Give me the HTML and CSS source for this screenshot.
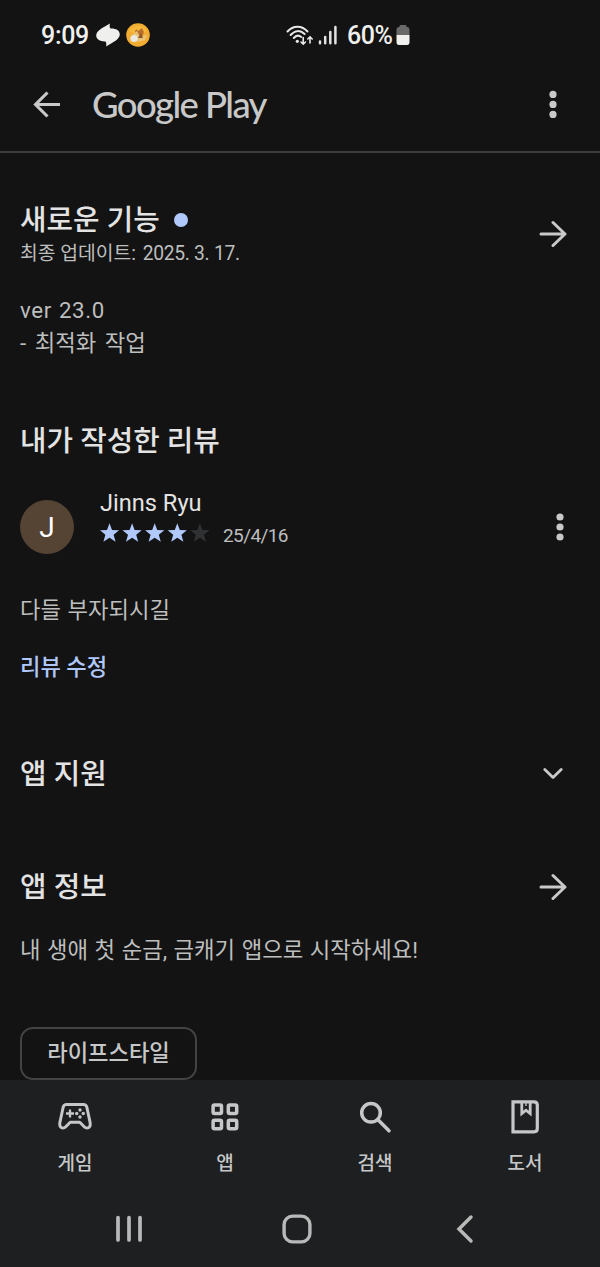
FILE: index.html
```html
<!DOCTYPE html>
<html lang="ko">
<head>
<meta charset="utf-8">
<title>Google Play</title>
<link rel="stylesheet" href="styles.css">
</head>
<body>
<div class="screen">
  <div class="status">
    <div class="status-left">
      <span class="clock">9:09</span>
      <svg class="swirl" width="24" height="24" viewBox="0 0 24 24"><path d="M14 .6C13.4 3 13.6 4.6 14.6 5.6C20 5.4 23.6 7.6 23.8 11.2C24 16 17 19.4 10 23.4C10.6 21 10.4 19.4 9.4 18.4C4 18.6 .4 16.4 .2 12.8C0 8 7 4.6 14 .6Z" fill="#efefed"/></svg>
      <svg class="coin" width="24" height="24" viewBox="0 0 24 24"><circle cx="12" cy="12" r="11.8" fill="#f2ac32"/><path d="M3 8C7 2 17 1 21 8L12 12Z" fill="#f8b83c"/><path d="M10 6L12 8L16 5L18 9L16 14L11 13L9 9Z" fill="#b9702c"/><path d="M6 12L11 8L13 12L16 13L21 12L19 17L12 19Z" fill="#e9c477"/><circle cx="8" cy="15.5" r="3.6" fill="#ece9e4"/><path d="M12 15L15 10L17 15Z" fill="#8d5526"/></svg>
    </div>
    <div class="status-center">
      <svg width="28" height="24" viewBox="0 0 28 24" fill="none" stroke="#e8e8e8" stroke-width="2" stroke-linecap="round"><path d="M1.5 8.5C7 2 16 2 21.5 8.5M4.6 12C9 7 14.5 7 18.6 11M7.8 15C10 12.4 13 12.2 15.3 14"/><circle cx="11.3" cy="18.3" r="1.6" fill="#e8e8e8" stroke="none"/><path d="M17.2 14.5V21M15 19L17.2 21.2L19.4 19M24 20V14M21.8 16L24 13.8L26.2 16" stroke-width="1.6"/></svg>
      <svg class="signal" width="20" height="24" viewBox="0 0 20 24" stroke="#e2e2e2" stroke-width="2.5" stroke-linecap="round"><path d="M2 18.5V20.3M7.2 14V20.3M12.3 9V20.3M17.4 4V20.3"/></svg>
      <span class="percent">60%</span>
      <svg class="battery" width="14" height="22" viewBox="0 0 14 22"><path d="M3.5 3V2Q3.5 1 5 1H9Q10.5 1 10.5 2V3H11Q13.5 3 13.5 6V11H.5V6Q.5 3 3 3Z" fill="#69696a"/><path d="M.5 11H13.5V18Q13.5 21 11 21H3Q.5 21 .5 18Z" fill="#f0f0ee"/></svg>
    </div>
  </div>

  <header class="appbar">
    <svg width="28" height="28" viewBox="0 0 28 28" fill="none" stroke="#c9c9c9" stroke-width="3.1"><path d="M27 14.5H3M14.5 2.5L2.5 14.5L14.5 26.5"/></svg>
    <span class="brand">Google Play</span>
    <svg class="more" width="8" height="28" viewBox="0 0 8 28" fill="#c9c9c9"><circle cx="4" cy="4.4" r="3.6"/><circle cx="4" cy="14.4" r="3.6"/><circle cx="4" cy="24.4" r="3.6"/></svg>
  </header>

  <main class="content">
    <section class="whats-new">
      <div class="row">
        <div>
          <div class="title-line"><h2>새로운 기능</h2><span class="dot"></span></div>
          <p class="updated">최종 업데이트: <span class="date">2025. 3. 17.</span></p>
        </div>
        <svg class="arrow" width="28" height="28" viewBox="0 0 28 28" fill="none" stroke="#c9c9c9" stroke-width="3" stroke-linecap="round" stroke-linejoin="round"><path d="M2 14H26M14 2.5L26 14L14 25.5"/></svg>
      </div>
      <p class="body notes"><span class="version">ver 23.0</span><br>- 최적화 작업</p>
    </section>

    <section class="review">
      <h2>내가 작성한 리뷰</h2>
      <div class="reviewer">
        <span class="avatar">J</span>
        <div class="meta">
          <div class="name">Jinns Ryu</div>
          <div class="rating">
            <svg width="110" height="20" viewBox="0 0 110 20" fill="#b1c8fb"><defs><path id="star" d="M9.5 .3L12 6.9L19.1 7.2L13.6 11.7L15.6 18.7L9.5 14.7L3.4 18.7L5.4 11.7L-.1 7.2L7 6.9Z"/></defs><use href="#star"/><use href="#star" x="22.6"/><use href="#star" x="45.2"/><use href="#star" x="67.8"/><use href="#star" x="90.4" fill="#303132"/></svg>
            <span class="review-date">25/4/16</span>
          </div>
        </div>
        <svg class="more" width="8" height="28" viewBox="0 0 8 28" fill="#c9c9c9"><circle cx="4" cy="4" r="3.6"/><circle cx="4" cy="14" r="3.6"/><circle cx="4" cy="24" r="3.6"/></svg>
      </div>
      <p class="body comment">다들 부자되시길</p>
      <a class="edit">리뷰 수정</a>
    </section>

    <section class="row support">
      <h2>앱 지원</h2>
      <svg class="chevron" width="20" height="14" viewBox="0 0 20 14" fill="none" stroke="#c9c9c9" stroke-width="2.8" stroke-linecap="round" stroke-linejoin="round"><path d="M1.8 2.5L10 10.5L18.2 2.5"/></svg>
    </section>

    <section class="about">
      <div class="row">
        <h2>앱 정보</h2>
        <svg width="28" height="28" viewBox="0 0 28 28" fill="none" stroke="#c9c9c9" stroke-width="3" stroke-linecap="round" stroke-linejoin="round"><path d="M2 14H26M14 2.5L26 14L14 25.5"/></svg>
      </div>
      <p class="body tagline">내 생애 첫 순금, 금캐기 앱으로 시작하세요!</p>
      <span class="chip">라이프스타일</span>
    </section>
  </main>

  <footer class="bottom">
    <nav class="tabs">
      <div class="tab"><svg width="36" height="36" viewBox="0 0 36 36" fill="none" stroke="#c6c7c8" stroke-width="3" stroke-linejoin="round"><path d="M9.5 5.5H26.5Q29 5.5 29.8 8L33.2 24Q33.6 29 30 29Q28.5 29 27.5 28L22.8 23.2H13.2L8.5 28Q7.5 29 6 29Q2.4 29 2.8 24L6.2 8Q7 5.5 9.5 5.5Z"/><path d="M13 10.5V18.5M9 14.5H17" stroke-width="2.3"/><g fill="#c6c7c8" stroke="none"><circle cx="23" cy="11" r="1.7"/><circle cx="19.7" cy="14.5" r="1.7"/><circle cx="26.3" cy="14.5" r="1.7"/><circle cx="23" cy="18" r="1.7"/></g></svg><span>게임</span></div>
      <div class="tab"><svg width="36" height="36" viewBox="0 0 36 36" fill="none" stroke="#c6c7c8" stroke-width="3.5"><rect x="6.1" y="6.1" width="8.4" height="8.4" rx="1.5"/><rect x="21.3" y="6.1" width="8.4" height="8.4" rx="1.5"/><rect x="6.1" y="21.3" width="8.4" height="8.4" rx="1.5"/><rect x="21.3" y="21.3" width="8.4" height="8.4" rx="1.5"/></svg><span>앱</span></div>
      <div class="tab"><svg width="36" height="36" viewBox="0 0 36 36" fill="none" stroke="#c6c7c8" stroke-width="3.5" stroke-linecap="round"><circle cx="14" cy="13.8" r="9.3"/><path d="M21 20.8L32 31.8"/></svg><span>검색</span></div>
      <div class="tab"><svg width="36" height="36" viewBox="0 0 36 36" fill="none" stroke="#c6c7c8" stroke-width="3.2"><path d="M6 2.8H27Q30.3 2.8 30.3 6.1V29.5Q30.3 32.8 27 32.8H6Z"/><path d="M14.8 3V14.6L19 11.2L23.2 14.6V3" stroke-width="2.8"/><path d="M19 3V7" stroke-width="1.4"/></svg><span>도서</span></div>
    </nav>
    <div class="system">
      <svg width="28" height="30" viewBox="0 0 28 30" stroke="#b9b9b9" stroke-width="3.7" stroke-linecap="round"><path d="M3 3.5V26M14 3.5V26M25 3.5V26"/></svg>
      <svg class="home" width="30" height="30" viewBox="0 0 30 30" fill="none" stroke="#b9b9b9" stroke-width="3.4"><rect x="2.1" y="2.1" width="25.8" height="25.8" rx="8.5"/></svg>
      <svg width="18" height="30" viewBox="0 0 18 30" fill="none" stroke="#b9b9b9" stroke-width="3.5" stroke-linecap="round"><path d="M15 3L3 15L15 27"/></svg>
    </div>
  </footer>
</div>
</body>
</html>
```
FILE: styles.css
```css
* { box-sizing: border-box; }
body { margin: 0; background: #131313; }
h2, p { margin: 0; }
svg { display: block; flex: none; }

.screen {
  width: 600px;
  height: 1267px;
  display: flex;
  flex-direction: column;
  overflow: hidden;
  background: #131313;
  color: #e3e3e3;
  font-family: Roboto, "Noto Sans CJK KR", sans-serif;
}

.status {
  display: flex;
  height: 70px;
  padding-left: 41px;
  color: #efefed;
  font-size: 25px;
  font-weight: 500;
  line-height: 71px;
}
.status-left { display: flex; align-items: center; width: 245px; }
.clock { width: 55px; letter-spacing: -0.3px; }
.coin { margin-left: 6px; }
.status-center { display: flex; align-items: center; }
.signal { margin-left: 4px; }
.percent { width: 49px; margin-left: 9px; letter-spacing: -0.5px; }

.appbar {
  display: flex;
  align-items: center;
  height: 83px;
  padding: 0 43px 13px 33px;
  border-bottom: 2px solid #3d3d3d;
}
.brand {
  margin-left: 31px;
  color: #c8c8c8;
  font-family: Lato, sans-serif;
  font-size: 36.5px;
  font-weight: 500;
  line-height: 44px;
  letter-spacing: -1.6px;
}
.more { margin-left: auto; }

.content { flex: none; height: 927px; padding: 49px 33px 0 20px; }
.row { display: flex; align-items: center; justify-content: space-between; }
h2 {
  font-size: 28.8px;
  font-weight: 500;
  line-height: 36px;
  white-space: nowrap;
}
.title-line { display: flex; align-items: center; gap: 14px; }
.dot { width: 14px; height: 14px; border-radius: 50%; background: #b1c8fb; }
.arrow { margin-bottom: 4px; }
.updated { margin-top: 1px; color: #bdbebe; font-size: 19.3px; line-height: 30px; }
.date { margin-left: 2px; letter-spacing: -0.3px; }
.body {
  color: #bdbebe;
  font-size: 22.3px;
  line-height: 33px;
  white-space: nowrap;
  word-spacing: 1px;
}
.notes { margin-top: 25px; word-spacing: 3px; }
.version { letter-spacing: 0.6px; word-spacing: 1px; }

.review { margin-top: 63px; }
.reviewer { display: flex; align-items: center; height: 54px; margin: 41px 3px 0 0; }
.avatar {
  width: 54px;
  height: 54px;
  margin-right: 26px;
  border-radius: 50%;
  background: #554334;
  color: #fff;
  font-size: 28px;
  line-height: 55px;
  text-align: center;
}
.meta { margin-bottom: 19px; }
.name { font-size: 23.6px; line-height: 30px; }
.rating { display: flex; align-items: center; height: 30px; }
.review-date {
  margin: 6px 0 0 13px;
  color: #bdbebe;
  font-size: 19px;
  line-height: 24px;
  letter-spacing: -0.6px;
}
.comment { margin-top: 40px; }
.edit {
  display: block;
  margin-top: 24px;
  color: #b1c8fb;
  font-size: 22.2px;
  font-weight: 500;
  line-height: 33px;
}

.support { margin-top: 72px; padding-right: 4px; }
.about { margin-top: 77px; }
.tagline { margin-top: 29px; }
.chip {
  display: block;
  width: 177px;
  height: 53px;
  margin-top: 60px;
  border: 2px solid #424344;
  border-radius: 13px;
  color: #c6c7c8;
  font-size: 22.2px;
  font-weight: 500;
  line-height: 49px;
  text-align: center;
}

.bottom { flex: 1; background: #1e1f20; }
.tabs { display: flex; height: 112px; padding-top: 19px; }
.tab {
  flex: 1;
  display: flex;
  flex-direction: column;
  align-items: center;
  gap: 16px;
  color: #c6c7c8;
  font-size: 19px;
  font-weight: 500;
  line-height: 26px;
}
.system {
  display: flex;
  align-items: center;
  justify-content: space-between;
  height: 74px;
  padding: 0 126px 0 115px;
}
.home { margin-right: 5px; }
```
